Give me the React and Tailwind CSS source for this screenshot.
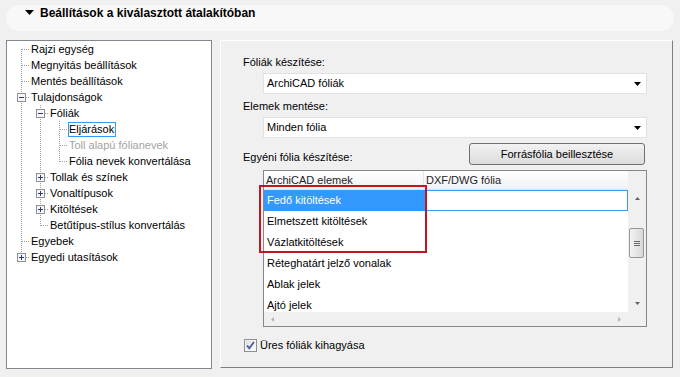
import React from "react";

const tree = [
  { label: "Rajzi egység", level: 0, guides: [], first: true },
  { label: "Megnyitás beállítások", level: 0, guides: [] },
  { label: "Mentés beállítások", level: 0, guides: [] },
  { label: "Tulajdonságok", level: 0, guides: [], box: "minus" },
  { label: "Fóliák", level: 1, guides: [true], box: "minus" },
  { label: "Eljárások", level: 2, guides: [true, true], focused: true },
  { label: "Toll alapú fólianevek", level: 2, guides: [true, true], disabled: true },
  { label: "Fólia nevek konvertálása", level: 2, guides: [true, true], last: true },
  { label: "Tollak és színek", level: 1, guides: [true], box: "plus" },
  { label: "Vonaltípusok", level: 1, guides: [true], box: "plus" },
  { label: "Kitöltések", level: 1, guides: [true], box: "plus" },
  { label: "Betűtípus-stílus konvertálás", level: 1, guides: [true], last: true },
  { label: "Egyebek", level: 0, guides: [] },
  { label: "Egyedi utasítások", level: 0, guides: [], box: "plus", last: true },
];

const rows = [
  "Elmetszett kitöltések",
  "Vázlatkitöltések",
  "Réteghatárt jelző vonalak",
  "Ablak jelek",
  "Ajtó jelek",
];

const Guide = ({ line }) => (
  <svg width="19" height="16" className="block shrink-0" shapeRendering="crispEdges">
    {line && <line x1="10.5" y1="0" x2="10.5" y2="16" stroke="#a0a0a0" strokeDasharray="1 1" />}
  </svg>
);

const Branch = ({ first, last, box }) => (
  <svg width="19" height="16" className="block shrink-0" shapeRendering="crispEdges">
    <line x1="10.5" y1={first ? 8 : 0} x2="10.5" y2={last ? 9 : 16} stroke="#a0a0a0" strokeDasharray="1 1" />
    <line x1="11" y1="8.5" x2="19" y2="8.5" stroke="#a0a0a0" strokeDasharray="1 1" />
    {box && (
      <>
        <rect x="6.5" y="4.5" width="8" height="8" fill="#f6f6f6" stroke="#919191" />
        <line x1="8" y1="8.5" x2="13" y2="8.5" stroke="#2b3b6b" />
        {box === "plus" && <line x1="10.5" y1="6" x2="10.5" y2="11" stroke="#2b3b6b" />}
      </>
    )}
  </svg>
);

const TreeRow = ({ item }) => (
  <div className="flex h-[16px] items-center">
    {item.guides.map((g, i) => (
      <Guide key={i} line={g} />
    ))}
    <Branch first={item.first} last={item.last} box={item.box} />
    <span
      className={
        "h-[15px] whitespace-nowrap border pr-[1px] leading-[13px] " +
        (item.focused ? "border-[#3399ff] " : "border-transparent ") +
        (item.disabled ? "text-[#a3a3a3]" : "text-black")
      }
    >
      {item.label}
    </span>
  </div>
);

const Dropdown = ({ value, className }) => (
  <div
    className={
      "ml-[20px] flex h-[21px] w-[384px] items-center justify-between border border-[#e2e2e2] bg-white pl-[3px] pr-[5px] " +
      className
    }
  >
    <span>{value}</span>
    <svg width="7" height="4" className="block">
      <polygon points="0,0 7,0 3.5,4" fill="#000" />
    </svg>
  </div>
);

const VScroll = () => (
  <div className="flex w-[18px] flex-col bg-[#f0f0f0]">
    <div className="flex h-[17px] items-center justify-center">
      <svg width="5" height="3" className="block">
        <polygon points="2.5,0 5,3 0,3" fill="#606060" />
      </svg>
    </div>
    <div className="h-[88px] pl-[1px] pt-[21px]">
      <div className="flex h-[30px] w-[15px] items-center justify-center rounded-[2px] border border-[#979797] bg-gradient-to-r from-[#f3f3f3] to-[#d8d8d8]">
        <div className="flex w-[6px] flex-col gap-[1px]">
          <div className="h-[1px] bg-[#6a6a6a]" />
          <div className="h-[1px] bg-[#6a6a6a]" />
          <div className="h-[1px] bg-[#6a6a6a]" />
        </div>
      </div>
    </div>
    <div className="flex h-[17px] items-center justify-center">
      <svg width="5" height="3" className="block">
        <polygon points="0,0 5,0 2.5,3" fill="#606060" />
      </svg>
    </div>
  </div>
);

const HScroll = () => (
  <div className="flex h-[14px] w-[364px] items-center justify-between bg-[#f0f0f0] px-[7px]">
    <svg width="3" height="5" className="block">
      <polygon points="3,0 3,5 0,2.5" fill="#b5b5b5" />
    </svg>
    <svg width="3" height="5" className="block">
      <polygon points="0,0 3,2.5 0,5" fill="#b5b5b5" />
    </svg>
  </div>
);

const Checkbox = () => (
  <svg width="13" height="13" className="block shrink-0" shapeRendering="geometricPrecision">
    <defs>
      <linearGradient id="cb" x1="0" y1="0" x2="1" y2="1">
        <stop offset="0" stopColor="#dcdcdc" />
        <stop offset="1" stopColor="#ffffff" />
      </linearGradient>
    </defs>
    <rect x="0.5" y="0.5" width="12" height="12" fill="#f4f4f4" stroke="#8e8f8f" />
    <rect x="2" y="2" width="9" height="9" fill="url(#cb)" />
    <path d="M3 6.5 L5.3 9.2 L10 3" fill="none" stroke="#4a5e96" strokeWidth="1.8" />
  </svg>
);

export default function App() {
  return (
    <div className="h-[377px] w-[680px] overflow-hidden bg-[#f0f0f0] pt-[5px] font-['Liberation_Sans',Arial,sans-serif] text-[11px] text-black">
      {/* Section header */}
      <div className="mx-[6px] flex h-[26px] items-start rounded-[13px] bg-[#f8f8f8] pl-[19px] pt-[1px]">
        <svg width="9" height="5" className="mt-[4px] block">
          <polygon points="0,0 9,0 4.5,5" fill="#000" />
        </svg>
        <span className="ml-[6px] text-[12px] font-bold leading-[14px]">
          Beállítások a kiválasztott átalakítóban
        </span>
      </div>

      <div className="mt-[9px] flex">
        {/* Tree */}
        <div className="ml-[6px] h-[329px] w-[206px] border border-[#828790] bg-white pl-[4px]">
          {tree.map((item) => (
            <TreeRow key={item.label} item={item} />
          ))}
        </div>

        {/* Settings panel */}
        <div className="ml-[8px] flex h-[328px] w-[453px] flex-col border border-b-[#7f7f7f] border-l-white border-r-[#7f7f7f] border-t-white pl-[22px]">
          <div className="mt-[14px] h-[14px] leading-[14px]">Fóliák készítése:</div>
          <Dropdown className="mt-[4px]" value="ArchiCAD fóliák" />
          <div className="mt-[5px] h-[14px] leading-[14px]">Elemek mentése:</div>
          <Dropdown className="mt-[4px]" value="Minden fólia" />

          <div className="mt-[5px] flex w-[404px] items-end">
            <span className="mb-[1px] leading-[14px]">Egyéni fólia készítése:</span>
            <button className="ml-auto mr-[2px] h-[22px] w-[176px] rounded-[3px] border border-[#707070] bg-gradient-to-b from-[#f2f2f2] to-[#dcdcdc] leading-[20px]">
              Forrásfólia beillesztése
            </button>
          </div>

          {/* List */}
          <div className="relative ml-[20px] mt-[5px] flex h-[157px] w-[384px] flex-col border border-[#828790] bg-white">
            <div className="flex h-[19px]">
              <div className="flex w-[364px] border-b border-[#e5e5e5] bg-gradient-to-b from-white to-[#f1f2f4] leading-[18px]">
                <div className="w-[160px] border-r border-[#e5e5e5] pl-[2px] text-[#1e1e1e]">ArchiCAD elemek</div>
                <div className="pl-[2px] text-[#1e1e1e]">DXF/DWG fólia</div>
              </div>
              <div className="w-[18px] bg-[#f0f0f0]" />
            </div>
            <div className="flex h-[122px]">
              <div className="w-[364px] overflow-hidden">
                <div className="flex h-[21px]">
                  <div className="w-[160px] bg-[#3399ff] pl-[3px] leading-[21px] text-white">Fedő kitöltések</div>
                  <div className="flex-1 border border-[#3399ff] bg-white" />
                </div>
                {rows.map((r) => (
                  <div key={r} className="h-[21px] pl-[3px] leading-[21px]">
                    {r}
                  </div>
                ))}
              </div>
              <VScroll />
            </div>
            <div className="flex">
              <HScroll />
              <div className="h-[14px] w-[18px] bg-[#f0f0f0]" />
            </div>
            {/* highlight overlay */}
            <div className="absolute left-[-5px] top-[14px] h-[68px] w-[168px] border-2 border-[#c0161f]" />
          </div>

          <div className="mt-[11px] flex items-center">
            <div className="ml-[1px]">
              <Checkbox />
            </div>
            <span className="ml-[3px] leading-[14px]">Üres fóliák kihagyása</span>
          </div>
        </div>
      </div>
    </div>
  );
}
